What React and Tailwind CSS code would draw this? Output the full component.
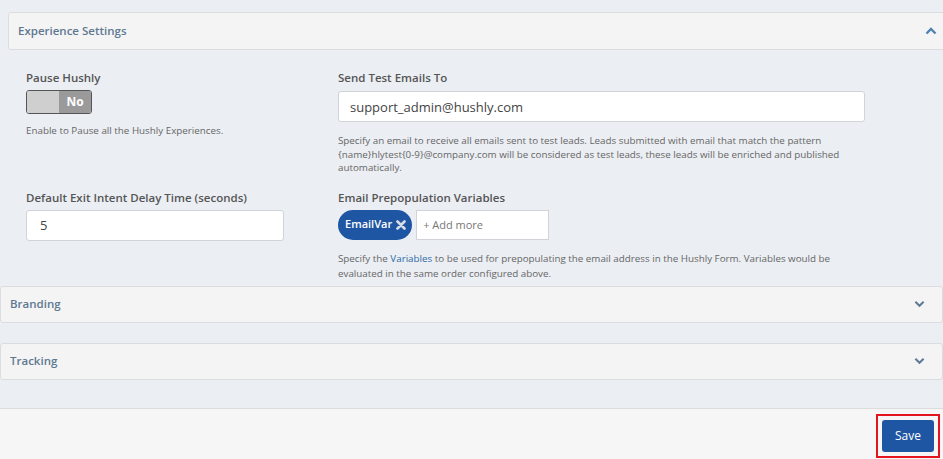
import React, { useState } from "react";

const ChevronUp = () => (
  <svg width="12" height="8" viewBox="0 0 12 8" className="text-[#4f82b3]">
    <path d="M1.5 6.5 L6 2 L10.5 6.5" fill="none" stroke="currentColor" strokeWidth="2.4" />
  </svg>
);

const ChevronDown = () => (
  <svg width="11" height="8" viewBox="0 0 12 8" className="text-[#5d7a98]">
    <path d="M1.5 1.5 L6 6 L10.5 1.5" fill="none" stroke="currentColor" strokeWidth="2.2" />
  </svg>
);

const Section = ({ title, className = "" }) => (
  <div
    className={`flex items-center justify-between h-[37px] bg-[#f4f4f4] border border-[#dadce0] rounded-[3px] ${className}`}
  >
    <span className="text-[11.5px] font-semibold text-[#5f7891]">{title}</span>
    <ChevronDown />
  </div>
);

const App = () => {
  const [paused, setPaused] = useState(false);
  const [email, setEmail] = useState("support_admin@hushly.com");
  const [delay, setDelay] = useState("5");

  return (
    <div className="w-[943px] h-[459px] bg-[#ebeef3] font-['Open_Sans',sans-serif] overflow-hidden flex flex-col">
      <div className="pt-3 flex-1">
        {/* experience settings */}
        <div className="ml-2 flex items-center justify-between h-[38px] bg-[#f4f4f4] border border-[#dadce0] rounded-[3px] pl-[9px] pr-[9px] mr-[-4px]">
          <span className="text-[11.5px] font-semibold text-[#5f7891]">Experience Settings</span>
          <ChevronUp />
        </div>

        <div className="grid grid-cols-[312px_1fr] pl-[26px] pt-[20px]">
          <div>
            <div className="text-[11.5px] font-semibold text-[#555] leading-[16px]">Pause Hushly</div>
            <button
              type="button"
              onClick={() => setPaused(!paused)}
              className="mt-[4px] flex w-[66px] h-[24px] border border-[#555] rounded-[3px] overflow-hidden"
            >
              <span className="w-[32px] h-full bg-[#cfcfcf]" />
              <span className="flex-1 h-full bg-[#9a9a9a] text-white text-[12px] font-bold flex items-center justify-center">
                {paused ? "Yes" : "No"}
              </span>
            </button>
            <p className="mt-[10px] text-[9.8px] text-[#666] leading-[14px]">
              Enable to Pause all the Hushly Experiences.
            </p>
          </div>
          <div>
            <div className="text-[11.5px] font-semibold text-[#555] leading-[16px]">Send Test Emails To</div>
            <input
              value={email}
              onChange={(e) => setEmail(e.target.value)}
              className="mt-[5px] w-[527px] h-[31px] bg-white border border-[#d0d3d8] rounded-[3px] px-[11px] text-[13px] text-[#444] outline-none"
            />
            <p className="mt-[12px] w-[520px] text-[9.8px] text-[#666] leading-[13.5px]">
              Specify an email to receive all emails sent to test leads. Leads submitted with email that match the pattern
              {" "}{"{name}"}hlytest{"{0-9}"}@company.com will be considered as test leads, these leads will be enriched and published automatically.
            </p>
          </div>

          <div className="pt-[15px]">
            <div className="text-[11.5px] font-semibold text-[#555] leading-[16px]">
              Default Exit Intent Delay Time (seconds)
            </div>
            <input
              value={delay}
              onChange={(e) => setDelay(e.target.value)}
              className="mt-[4px] w-[258px] h-[31px] bg-white border border-[#d0d3d8] rounded-[3px] px-[13px] text-[13px] text-[#444] outline-none"
            />
          </div>
          <div className="pt-[15px]">
            <div className="text-[11.5px] font-semibold text-[#555] leading-[16px]">Email Prepopulation Variables</div>
            <div className="mt-[4px] flex items-center gap-[4px]">
              <span className="flex items-center gap-[4px] h-[30px] pl-[7px] pr-[6px] rounded-full bg-[#1f56a3] text-white text-[11px] font-semibold">
                EmailVar
                <svg width="10" height="10" viewBox="0 0 10 10">
                  <path d="M1.5 1.5 L8.5 8.5 M8.5 1.5 L1.5 8.5" stroke="#d8dde6" strokeWidth="2.6" strokeLinecap="round" />
                </svg>
              </span>
              <input
                placeholder="+ Add more"
                className="w-[133px] h-[30px] bg-white border border-[#d0d3d8] px-[6px] text-[11px] text-[#444] placeholder:text-[#777] outline-none"
              />
            </div>
            <p className="mt-[11px] w-[520px] text-[9.8px] text-[#666] leading-[15px]">
              Specify the <span className="text-[#2e6aa8]">Variables</span> to be used for prepopulating the email address in the Hushly Form. Variables would be evaluated in the same order configured above.
            </p>
          </div>
        </div>

        <Section title="Branding" className="mt-[5px] pl-[9px] pr-[17px]" />
        <Section title="Tracking" className="mt-[20px] pl-[9px] pr-[17px]" />
      </div>

      <div className="h-[51px] bg-[#f6f6f6] border-t border-[#dcdcdc] flex justify-end items-start pt-[5px] pr-[3px]">
        <div className="border-2 border-[#e3141e] p-[4px]">
          <button type="button" className="w-[52px] h-[32px] bg-[#1f56a3] rounded-[3px] text-white text-[12px] font-medium">
            Save
          </button>
        </div>
      </div>
    </div>
  );
};

export default App;
